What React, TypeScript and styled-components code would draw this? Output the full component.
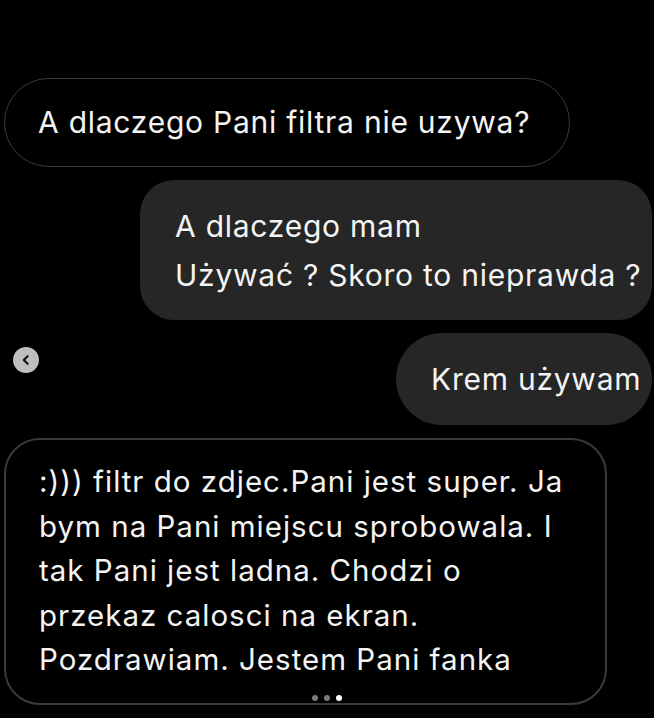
import React from "react";
import styled, { createGlobalStyle } from "styled-components";

const GlobalStyle = createGlobalStyle`
  html, body {
    margin: 0;
    padding: 0;
    background: #000;
  }
  body {
    font-family: Inter, "Noto Sans", "Liberation Sans", sans-serif;
    color: #f4f4f4;
    -webkit-font-smoothing: antialiased;
  }
`;

const Screen = styled.div`
  position: relative;
  width: 654px;
  height: 718px;
  overflow: hidden;
  background: #000;
  box-sizing: border-box;
  padding: 78px 2px 0 4px;
  display: flex;
  flex-direction: column;
  gap: 13px;
`;

const Bubble = styled.div<{ $mine?: boolean; $outlined?: boolean; $radius: number }>`
  box-sizing: border-box;
  align-self: ${(p) => (p.$mine ? "flex-end" : "flex-start")};
  background: ${(p) => (p.$mine ? "#262626" : "#000")};
  border: ${(p) => (p.$outlined ? "1.5px solid #3a3a3a" : "none")};
  border-radius: ${(p) => p.$radius}px;
  font-size: 30px;
  line-height: 40px;
  letter-spacing: 0.75px;
  white-space: nowrap;
`;

const QuestionBubble = styled(Bubble)`
  padding: 22.5px 39px 24.5px 33px;
`;

const ReplyBubble = styled(Bubble)`
  width: 512px;
  padding: 22px 0 20px 35px;
  line-height: 49px;
`;

const ShortBubble = styled(Bubble)`
  width: 256px;
  padding: 26px 0 26px 35px;
`;

const LongBubble = styled(Bubble)`
  width: 603px;
  height: 267px;
  padding: 19px 0 0 33px;
  font-size: 29.5px;
  line-height: 44.5px;
  letter-spacing: 1px;
  border-width: 2px;
`;

const Line = styled.div``;

const NavButton = styled.div`
  position: absolute;
  left: 13px;
  top: 347px;
  width: 26px;
  height: 26px;
  border-radius: 50%;
  background: #bebebe;
  display: flex;
  align-items: center;
  justify-content: center;
`;

const Dots = styled.div`
  position: absolute;
  left: 0;
  right: 0;
  top: 695px;
  display: flex;
  justify-content: center;
  gap: 6px;
`;

const Dot = styled.span<{ $active?: boolean }>`
  width: 6px;
  height: 6px;
  border-radius: 50%;
  background: ${(p) => (p.$active ? "#ffffff" : "#7a7a7a")};
`;

const longLines = [
  ":))) filtr do zdjec.Pani jest super. Ja",
  "bym na Pani miejscu sprobowala. I",
  "tak Pani jest ladna. Chodzi o",
  "przekaz calosci na ekran.",
  "Pozdrawiam. Jestem Pani fanka",
];

export default function App() {
  return (
    <>
      <GlobalStyle />
      <Screen>
        <QuestionBubble $outlined $radius={45}>
          A dlaczego Pani filtra nie uzywa?
        </QuestionBubble>
        <ReplyBubble $mine $radius={34}>
          <Line>A dlaczego mam</Line>
          <Line>Używać ? Skoro to nieprawda ?</Line>
        </ReplyBubble>
        <ShortBubble $mine $radius={46}>
          Krem używam
        </ShortBubble>
        <LongBubble $outlined $radius={36}>
          {longLines.map((l) => (
            <Line key={l}>{l}</Line>
          ))}
        </LongBubble>
        <NavButton>
          <svg width="12" height="12" viewBox="0 0 12 12">
            <path d="M7.6 2.2 L3.8 6 L7.6 9.8" fill="none" stroke="#111" strokeWidth="2.2" strokeLinecap="round" strokeLinejoin="round" />
          </svg>
        </NavButton>
        <Dots>
          <Dot />
          <Dot />
          <Dot $active />
        </Dots>
      </Screen>
    </>
  );
}
